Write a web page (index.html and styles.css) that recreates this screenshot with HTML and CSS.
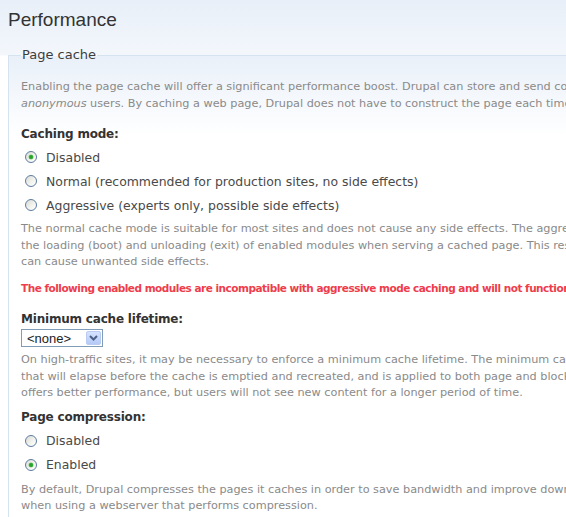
FILE: index.html
```html
<!DOCTYPE html>
<html>
<head>
<meta charset="utf-8">
<title>Performance</title>
<link rel="stylesheet" href="styles.css">
</head>
<body>
<h1 class="title">Performance</h1>
<fieldset class="box">
  <legend class="legend">Page cache</legend>
  <p class="desc first">Enabling the page cache will offer a significant performance boost. Drupal can store and send compressed cached pages requested by<br><em>anonymous</em> users. By caching a web page, Drupal does not have to construct the page each time someone wants to view it.</p>

  <div class="item item-mode">
    <div class="label">Caching mode:</div>
    <div class="radios">
      <div class="radio"><span class="dot on"></span>Disabled</div>
      <div class="radio"><span class="dot"></span>Normal (recommended for production sites, no side effects)</div>
      <div class="radio"><span class="dot"></span>Aggressive (experts only, possible side effects)</div>
    </div>
    <p class="desc">The normal cache mode is suitable for most sites and does not cause any side effects. The aggressive cache mode causes Drupal to skip<br>the loading (boot) and unloading (exit) of enabled modules when serving a cached page. This results in an additional performance boost but<br>can cause unwanted side effects.</p>
  </div>

  <p class="warn">The following enabled modules are incompatible with aggressive mode caching and will not function properly: statistics</p>

  <div class="item item-lifetime">
    <div class="label">Minimum cache lifetime:</div>
    <div class="select"><span class="sel-text">&lt;none&gt;</span><span class="sel-btn"><svg width="9" height="6" viewBox="0 0 9 6"><path d="M1 1 L4.5 4.5 L8 1" fill="none" stroke="#4d6185" stroke-width="2"/></svg></span></div>
    <p class="desc">On high-traffic sites, it may be necessary to enforce a minimum cache lifetime. The minimum cache lifetime is the minimum amount of time<br>that will elapse before the cache is emptied and recreated, and is applied to both page and block caches. A larger minimum cache lifetime<br>offers better performance, but users will not see new content for a longer period of time.</p>
  </div>

  <div class="item item-compress">
    <div class="label">Page compression:</div>
    <div class="radios">
      <div class="radio"><span class="dot"></span>Disabled</div>
      <div class="radio"><span class="dot on"></span>Enabled</div>
    </div>
    <p class="desc">By default, Drupal compresses the pages it caches in order to save bandwidth and improve download times. This option should be disabled<br>when using a webserver that performs compression.</p>
  </div>
</fieldset>
</body>
</html>
```
FILE: styles.css
```css
html, body {
  margin: 0;
  padding: 0;
}
body {
  width: 566px;
  height: 517px;
  overflow: hidden;
  background: linear-gradient(#e8eff8 0px, #f3f7fc 55px, #ffffff 56px);
  font-family: "DejaVu Sans", Verdana, sans-serif;
  color: #494949;
}
.title {
  margin: 8px 0 0 8px;
  font-family: "Liberation Sans", Arial, sans-serif;
  font-weight: normal;
  font-size: 19px;
  line-height: 24px;
  color: #333;
}
.box {
  margin: 14px 0 0 8px;
  padding: 0 0 20px 12px;
  width: 1000px;
  border: 1px solid #d5e2f0;
  border-right: none;
  background: linear-gradient(#e9f0f9 0px, #ffffff 80px);
}
.legend {
  padding: 0 1px;
  font-size: 13px;
  line-height: 18px;
  color: #3d3d3d;
}
.desc {
  margin: 0;
  font-size: 11.25px;
  line-height: 16.5px;
  color: #8a8a8a;
  white-space: nowrap;
}
.desc.first {
  margin-top: 15px;
}
.item-mode {
  margin-top: 13px;
}
.item-lifetime {
  margin-top: 14px;
}
.item-compress {
  margin-top: 6px;
}
.label {
  font-size: 12px;
  font-weight: bold;
  letter-spacing: -0.2px;
  line-height: 18px;
  color: #333;
}
.item-mode .radios {
  margin-top: 2px;
}
.item-compress .radios {
  margin-top: 3px;
}
.radio {
  display: flex;
  align-items: center;
  height: 24px;
  font-size: 12.45px;
  color: #494949;
  white-space: nowrap;
}
.item-mode .radios + .desc {
  margin-top: 4px;
}
.item-compress .radios + .desc {
  margin-top: 5px;
}
.dot {
  box-sizing: border-box;
  width: 12px;
  height: 12px;
  margin: 0 9px 0 4px;
  border: 1px solid #5b7ca3;
  border-radius: 50%;
  background: linear-gradient(135deg, #dcdcd5 0%, #f4f4f0 60%, #ffffff 100%);
  position: relative;
}
.dot.on::after {
  content: "";
  position: absolute;
  left: 3px;
  top: 3px;
  width: 4px;
  height: 4px;
  border-radius: 50%;
  background: #2aa12a;
  box-shadow: 0 0 0 0.5px #7fcf7f;
}
.warn {
  margin: 9px 0 0;
  font-size: 10.5px;
  letter-spacing: -0.5px;
  font-weight: bold;
  line-height: 16.5px;
  color: #ee3d4b;
  white-space: nowrap;
}
.select {
  display: flex;
  align-items: center;
  justify-content: space-between;
  box-sizing: border-box;
  width: 82px;
  height: 18px;
  margin-top: 1px;
  padding: 0 1px 0 5px;
  border: 1px solid #7f9db9;
  background: #fff;
  font-family: "Liberation Sans", Arial, sans-serif;
  font-size: 13px;
  color: #222;
}
.select + .desc {
  margin-top: 5px;
}
.sel-btn {
  display: flex;
  align-items: center;
  justify-content: center;
  width: 15px;
  height: 14px;
  box-sizing: border-box;
  border: 1px solid #b9cbf3;
  border-radius: 2px;
  background: linear-gradient(#d6e3fe, #b4c9f7);
}
```
